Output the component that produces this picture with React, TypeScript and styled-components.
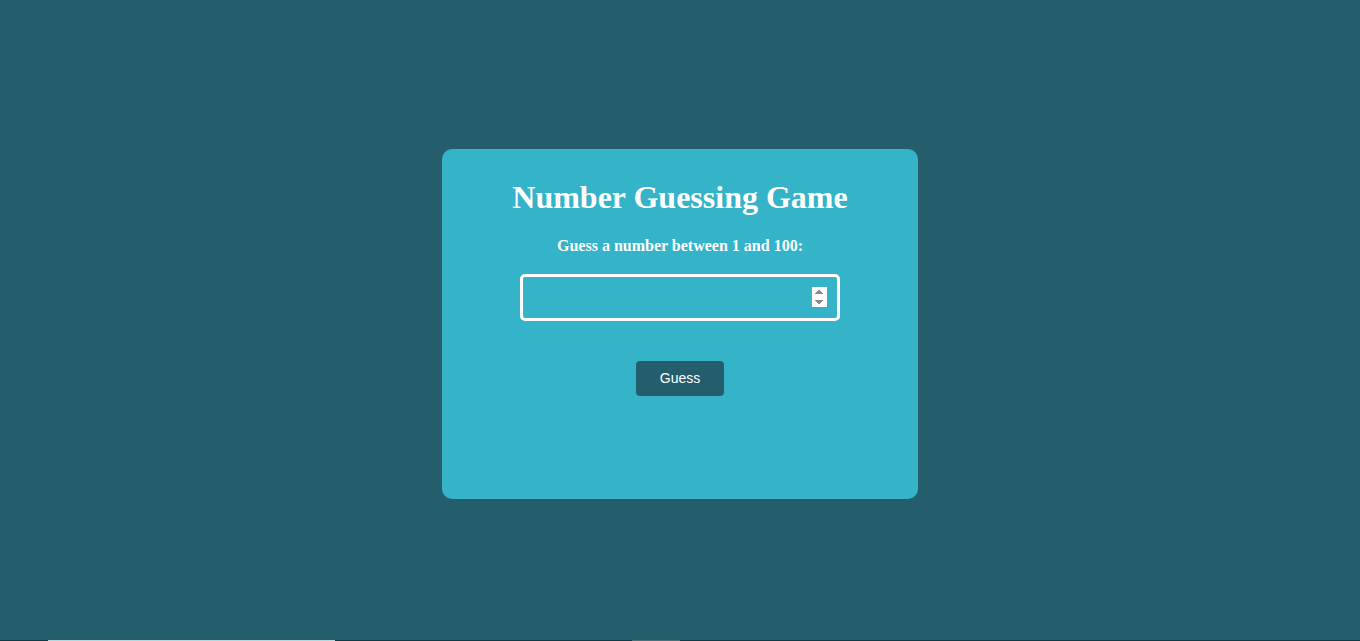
import React, { useState } from 'react';
import styled, { createGlobalStyle } from 'styled-components';

const GlobalStyle = createGlobalStyle`
  html, body {
    margin: 0;
    padding: 0;
    background: #245e6c;
  }
  body {
    font-family: 'Liberation Serif', 'Times New Roman', serif;
  }
`;

const Page = styled.div`
  min-height: 100vh;
  display: flex;
  align-items: center;
  justify-content: center;
  padding-top: 6px;
  box-sizing: border-box;
`;

const Card = styled.div`
  width: 476px;
  height: 350px;
  box-sizing: border-box;
  background: #34b3c9;
  border-radius: 10px;
  padding-top: 30px;
  display: flex;
  flex-direction: column;
  align-items: center;
  color: #fff;
`;

const Title = styled.h1`
  margin: 0;
  font-size: 32px;
  font-weight: bold;
  line-height: 37px;
`;

const Prompt = styled.p`
  margin: 21px 0 0;
  font-size: 16px;
  font-weight: bold;
  line-height: 18px;
`;

const GuessInput = styled.input`
  margin-top: 19px;
  width: 320px;
  height: 47px;
  box-sizing: border-box;
  border: 3px solid #fff;
  border-radius: 5px;
  background: transparent;
  color: #fff;
  font-size: 16px;
  padding: 0 10px;
  outline: none;

  &::-webkit-inner-spin-button {
    opacity: 1;
    height: 20px;
  }
`;

const GuessButton = styled.button`
  margin-top: 40px;
  width: 88px;
  height: 35px;
  border: none;
  border-radius: 4px;
  background: #245e6c;
  color: #fff;
  font-family: 'Liberation Sans', Arial, sans-serif;
  font-size: 14px;
  cursor: pointer;
`;

const Strip = styled.div`
  position: fixed;
  left: 0;
  right: 0;
  bottom: 0;
  height: 1px;
  background: linear-gradient(to right, #123a44 48px, #b9d6dc 48px, #b9d6dc 335px, #123a44 335px, #123a44 632px, #4d6f77 632px, #4d6f77 680px, #123a44 680px);
`;

export default function App() {
  const [value, setValue] = useState('');
  return (
    <>
      <GlobalStyle />
      <Page>
        <Card>
          <Title>Number Guessing Game</Title>
          <Prompt>Guess a number between 1 and 100:</Prompt>
          <GuessInput type="number" min={1} max={100} value={value} onChange={e => setValue(e.target.value)} />
          <GuessButton>Guess</GuessButton>
        </Card>
      </Page>
      <Strip />
    </>
  );
}
